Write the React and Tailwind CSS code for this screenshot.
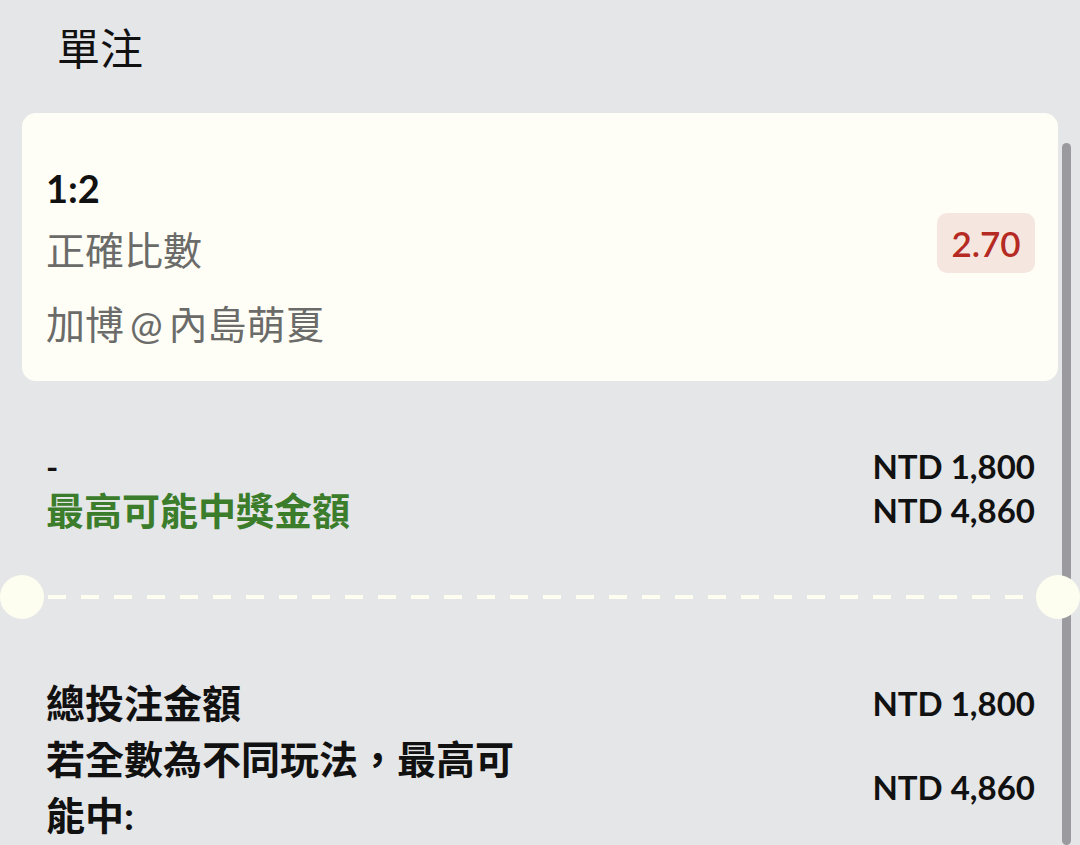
import React from 'react';

const FONT = "font-['Lato','Noto_Sans_CJK_TC',sans-serif]";

const BetCard = () => (
  <div className="mx-[22px] h-[268px] rounded-[14px] bg-[#fefef6] pl-[24px] pr-[23px] flex justify-between">
    <div className="pt-[47px] flex flex-col">
      <div className="h-[56px] leading-[56px] text-[38px] font-bold text-[#111]">1:2</div>
      <div className="mt-[6px] h-[56px] leading-[56px] text-[39px] text-[#6b6b69]">正確比數</div>
      <div className="mt-[18px] h-[56px] leading-[56px] text-[39px] text-[#6b6b69] [word-spacing:-4px]">
        加博 @ 內島萌夏
      </div>
    </div>
    <div className="self-center mb-[8px] w-[98px] h-[60px] rounded-[10px] bg-[#f5e7e0] flex items-center justify-center text-[35px] font-semibold text-[#b52a22]">
      2.70
    </div>
  </div>
);

const Divider = () => (
  <div className="relative z-10 mt-[43px] flex items-center">
    <div className="w-[44px] h-[44px] rounded-full bg-[#fefef0]" />
    <div className="flex-1 mx-[4px] h-[4px] bg-[repeating-linear-gradient(to_right,#fefef0_0_18px,transparent_18px_33px)]" />
    <div className="w-[44px] h-[44px] rounded-full bg-[#fefef0]" />
  </div>
);

export default function App() {
  return (
    <div className={`relative w-full h-[845px] overflow-hidden bg-[#e5e6e8] ${FONT}`}>
      {/* scrollbar */}
      <div className="absolute right-[9px] top-[143px] bottom-0 w-[9px] rounded-full bg-[#9b9b9f]" />

      <div className="pt-[19px] pl-[57px] h-[79px] leading-[60px] text-[43px] text-[#111]">單注</div>

      <div className="mt-[34px]">
        <BetCard />
      </div>

      <div className="mt-[63px] pl-[46px] pr-[45px] flex justify-between">
        <div className="flex flex-col">
          <div className="h-[44px] leading-[44px] text-[33px] font-bold text-[#111]">-</div>
          <div className="h-[44px] leading-[44px] text-[38px] font-bold text-[#3b7d2b]">最高可能中獎金額</div>
        </div>
        <div className="flex flex-col items-end text-[33px] font-bold text-[#111]">
          <div className="h-[44px] leading-[44px]">NTD 1,800</div>
          <div className="h-[44px] leading-[44px]">NTD 4,860</div>
        </div>
      </div>

      <Divider />

      <div className="mt-[56px] pl-[46px] pr-[45px] flex flex-col font-bold text-[#111]">
        <div className="flex justify-between items-center">
          <div className="leading-[56px] text-[39px]">總投注金額</div>
          <div className="leading-[56px] text-[33px]">NTD 1,800</div>
        </div>
        <div className="flex justify-between items-center">
          <div className="w-[480px] leading-[56px] text-[39px]">若全數為不同玩法，最高可能中:</div>
          <div className="leading-[56px] text-[33px]">NTD 4,860</div>
        </div>
      </div>
    </div>
  );
}
